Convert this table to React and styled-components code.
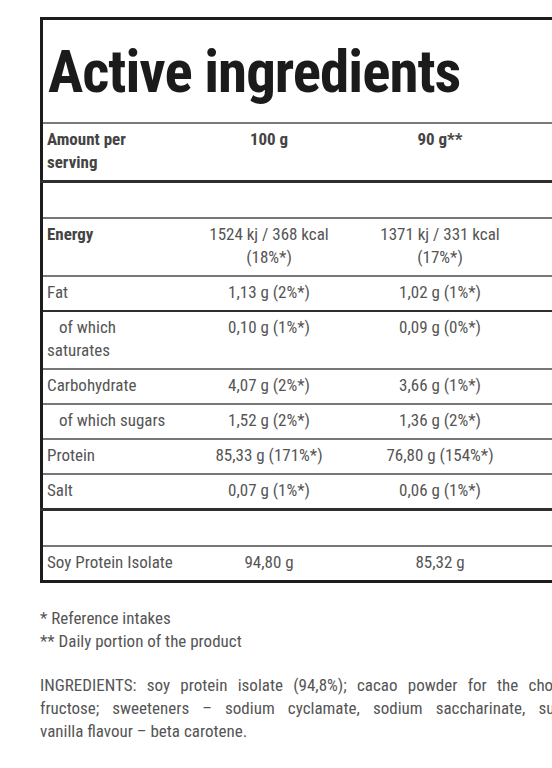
import React from 'react';
import styled, { createGlobalStyle } from 'styled-components';

const Global = createGlobalStyle`
  html, body { margin: 0; padding: 0; background: #fff; overflow: hidden; }
  body { font-family: "Roboto Condensed", "Roboto", "Liberation Sans", sans-serif; }
`;

const Page = styled.div`
  width: 760px;
  padding: 17px 0 0 40px;
  color: #555;
  font-size: 17px;
  line-height: 23px;
`;

const Table = styled.table`
  border-collapse: collapse;
  table-layout: fixed;
  width: 720px;
  border: 3px solid #1c1c1c;
`;

const TitleCell = styled.th`
  text-align: left;
  padding: 19px 5px 17px;
  font-size: 59px;
  line-height: 66px;
  letter-spacing: -1px;
  font-weight: 700;
  color: #1b1b1b;
  border-bottom: 2px solid #7a7a7a;
`;

const borders = {
  normal: '2px solid #777',
  dark: '2px solid #2e2e2e',
  strong: '3px solid #2e2e2e',
};

const Row = styled.tr`
  border-bottom: ${(p) => borders[p.$line || 'normal']};
`;

const Cell = styled.td`
  padding: 4px 4px 6px;
  vertical-align: top;
  text-align: ${(p) => (p.$label ? 'left' : 'center')};
  font-weight: ${(p) => (p.$bold ? 700 : 400)};
  color: ${(p) => (p.$bold ? '#444' : '#555')};
  text-indent: ${(p) => (p.$indent ? '12px' : '0')};
`;

const EmptyCell = styled.td`
  padding: 4px 4px 7px;
`;

const Notes = styled.div`
  margin-top: 24px;
  width: 614px;
`;

const Para = styled.p`
  margin: 0 0 21px;
`;

const JustLine = styled.span`
  display: block;
  text-align: justify;
  text-align-last: ${(p) => (p.$last ? 'left' : 'justify')};
`;

const rows = [
  { label: 'Amount per serving', a: '100 g', b: '90 g**', head: true, line: 'strong' },
  { empty: true },
  { label: 'Energy', a: ['1524 kj / 368 kcal', '(18%*)'], b: ['1371 kj / 331 kcal', '(17%*)'], boldLabel: true },
  { label: 'Fat', a: '1,13 g (2%*)', b: '1,02 g (1%*)', line: 'dark' },
  { label: 'of which saturates', a: '0,10 g (1%*)', b: '0,09 g (0%*)', indent: true },
  { label: 'Carbohydrate', a: '4,07 g (2%*)', b: '3,66 g (1%*)' },
  { label: 'of which sugars', a: '1,52 g (2%*)', b: '1,36 g (2%*)', indent: true },
  { label: 'Protein', a: '85,33 g (171%*)', b: '76,80 g (154%*)' },
  { label: 'Salt', a: '0,07 g (1%*)', b: '0,06 g (1%*)', line: 'strong' },
  { empty: true },
  { label: 'Soy Protein Isolate', a: '94,80 g', b: '85,32 g' },
];

const Lines = ({ value }) =>
  Array.isArray(value) ? (
    <>
      {value[0]}
      <br />
      {value[1]}
    </>
  ) : (
    value
  );

export default function App() {
  return (
    <>
      <Global />
      <Page>
        <Table>
          <colgroup>
            <col style={{ width: 142 }} />
            <col style={{ width: 171 }} />
            <col style={{ width: 171 }} />
            <col />
          </colgroup>
          <thead>
            <tr>
              <TitleCell colSpan={4}>Active ingredients</TitleCell>
            </tr>
          </thead>
          <tbody>
            {rows.map((r, i) =>
              r.empty ? (
                <Row key={i}>
                  <EmptyCell>&nbsp;</EmptyCell>
                  <EmptyCell />
                  <EmptyCell />
                  <EmptyCell />
                </Row>
              ) : (
                <Row key={i} $line={r.line}>
                  <Cell $label $bold={r.head || r.boldLabel} $indent={r.indent}>
                    {r.label}
                  </Cell>
                  <Cell $bold={r.head}>
                    <Lines value={r.a} />
                  </Cell>
                  <Cell $bold={r.head}>
                    <Lines value={r.b} />
                  </Cell>
                  <Cell />
                </Row>
              )
            )}
          </tbody>
        </Table>
        <Notes>
          <Para>
            * Reference intakes
            <br />
            ** Daily portion of the product
          </Para>
          <Para>
            <JustLine>INGREDIENTS: soy protein isolate (94,8%); cacao powder for the chocolate flavour;</JustLine>
            <JustLine>fructose; sweeteners – sodium cyclamate, sodium saccharinate, sucralose; color</JustLine>
            <JustLine $last>vanilla flavour – beta carotene.</JustLine>
          </Para>
        </Notes>
      </Page>
    </>
  );
}
